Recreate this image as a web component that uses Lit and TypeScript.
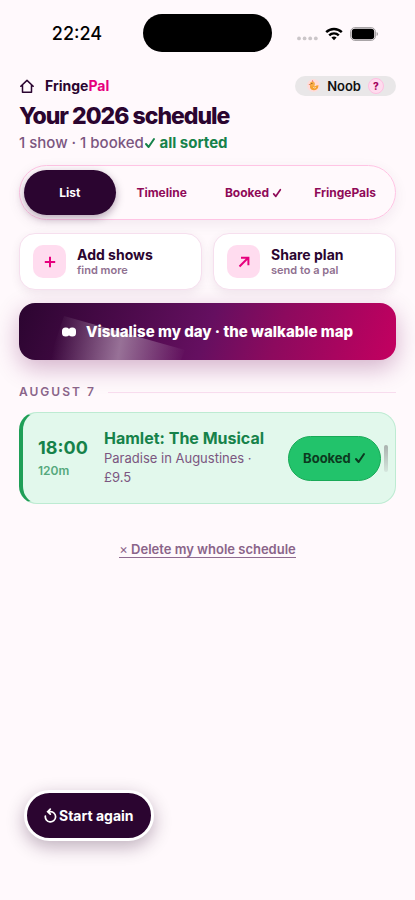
import { LitElement, html, css, svg } from "lit";
import { customElement, state } from "lit/decorators.js";
import { classMap } from "lit/directives/class-map.js";

const check = html`<svg class="check" viewBox="0 0 12 12" aria-hidden="true"><path d="M2 7l2.6 3L10 2" /></svg>`;

@customElement("status-bar")
class StatusBar extends LitElement {
  static styles = css`
    :host {
      display: grid;
      grid-template-columns: 1fr 129px 1fr;
      align-items: center;
      height: 38px;
      padding: 14px 0 0;
      color: #000;
    }
    .clock {
      padding: 2px 0 0 11px;
      text-align: center;
      font-size: 18px;
      line-height: 24px;
      font-weight: 500;
    }
    .island {
      height: 38px;
      border-radius: 19px;
      background: #000;
    }
    .signals {
      display: flex;
      align-items: center;
      gap: 7px;
      padding: 1px 0 0 25px;
    }
    .dots { width: 21px; height: 14px; }
    .wifi { width: 18px; height: 14px; }
    .battery { width: 28px; height: 14px; }
  `;

  render() {
    return html`
      <span class="clock">22:24</span>
      <span class="island"></span>
      <span class="signals">
        <svg class="dots" viewBox="0 0 21 14" fill="#cbc6c9">
          ${[2, 7.6, 13.2, 18.8].map((x) => svg`<circle cx=${x} cy="11.4" r="1.9" />`)}
        </svg>
        <svg class="wifi" viewBox="0 0 18 14" fill="none" stroke="#000" stroke-width="2.4">
          <path d="M1.2 5.2a11 11 0 0 1 15.6 0" />
          <path d="M4.2 8.4a6.8 6.8 0 0 1 9.6 0" />
          <path d="M9 13.2L6.4 10.6a3.8 3.8 0 0 1 5.2 0z" fill="#000" stroke="none" />
        </svg>
        <svg class="battery" viewBox="0 0 28 14">
          <rect x=".6" y=".6" width="24.8" height="12.8" rx="4.2" fill="none" stroke="#9f9b9d" />
          <rect x="1.8" y="1.8" width="22.4" height="10.4" rx="3" />
          <path d="M26.6 5v4q1.4-.6 1.4-2t-1.4-2z" fill="#9f9b9d" />
        </svg>
      </span>
    `;
  }
}

@customElement("app-root")
class AppRoot extends LitElement {
  @state() private tab = "List";

  static styles = css`
    :host {
      display: block;
      position: relative;
      box-sizing: border-box;
      min-height: 100vh;
      background: #fff9fc;
      color: #2b0530;
      font-family: Inter, "Liberation Sans", sans-serif;
      font-size: 14px;
      line-height: 18px;
    }
    button {
      font: inherit;
      color: inherit;
      border: 0;
      padding: 0;
      margin: 0;
      background: none;
      cursor: pointer;
    }
    .page { padding: 23px 19px 120px; }
    .check {
      width: 12px;
      height: 12px;
      fill: none;
      stroke: currentColor;
      stroke-width: 2;
      stroke-linecap: round;
      stroke-linejoin: round;
      vertical-align: -1px;
    }

    .top {
      display: flex;
      justify-content: space-between;
      align-items: center;
      height: 21px;
    }
    .brand {
      display: flex;
      align-items: center;
      gap: 10px;
      color: inherit;
      text-decoration: none;
      font-weight: 700;
    }
    .brand svg { width: 16px; height: 16px; }
    .pink { color: #e6007e; }
    .user {
      display: flex;
      align-items: center;
      gap: 7px;
      box-sizing: border-box;
      height: 20px;
      padding: 0 12px;
      border-radius: 10px;
      background: #e9e7e8;
      color: #111;
      font-size: 13px;
      font-weight: 600;
    }
    .user svg { width: 13px; height: 13px; }
    .help {
      box-sizing: border-box;
      width: 16px;
      height: 16px;
      border: 1px solid #ffbfe2;
      border-radius: 8px;
      background: #ffdcee;
      color: #a3005c;
      font-size: 10px;
      line-height: 14px;
      font-weight: 800;
      text-align: center;
    }

    h1 {
      margin: 4px 0 0;
      font-size: 23px;
      line-height: 32px;
      font-weight: 800;
      letter-spacing: -1px;
    }
    .summary {
      margin: 1px 0 0;
      font-size: 15px;
      line-height: 20px;
      font-weight: 500;
      color: #7b5680;
    }
    .sorted { color: #16824a; font-weight: 700; }

    .tabs {
      display: grid;
      grid-template-columns: repeat(4, 1fr);
      margin-top: 12px;
      padding: 4px;
      border: 1px solid #ffc4e4;
      border-radius: 28px;
      box-shadow: 0 4px 14px rgba(75, 10, 70, .07);
    }
    .tab {
      height: 45px;
      border-radius: 23px;
      color: #8f0a58;
      font-size: 12px;
      font-weight: 700;
      white-space: nowrap;
    }
    .tab .check { width: 10px; height: 10px; }
    .tab.on {
      background: #2b0530;
      color: #fff;
      box-shadow: 0 3px 8px rgba(43, 5, 48, .35);
    }

    .actions {
      display: grid;
      grid-template-columns: 1fr 1fr;
      gap: 11px;
      margin-top: 13px;
    }
    .action {
      display: flex;
      align-items: center;
      gap: 11px;
      height: 57px;
      padding: 0 13px;
      border: 1px solid #f6dfee;
      border-radius: 16px;
      background: #fff;
      box-shadow: 0 3px 10px rgba(75, 10, 70, .08);
      text-align: left;
    }
    .tile {
      display: grid;
      place-items: center;
      width: 33px;
      height: 33px;
      border-radius: 10px;
      background: #ffdcef;
    }
    .tile svg {
      width: 14px;
      height: 14px;
      fill: none;
      stroke: #e6007e;
      stroke-width: 2;
    }
    .action strong, .action small { display: block; }
    .action strong { font-size: 14px; line-height: 17px; font-weight: 700; }
    .action small { font-size: 11px; line-height: 14px; font-weight: 600; color: #8f7090; }

    .map {
      display: flex;
      position: relative;
      overflow: hidden;
      align-items: center;
      justify-content: center;
      gap: 10px;
      width: 100%;
      height: 57px;
      border-radius: 16px;
      background: linear-gradient(110deg, #2b0530 0%, #650f60 50%, #8c0a5e 68%, #c40060 100%);
      color: #fff;
      font-size: 15px;
      font-weight: 800;
    }
    .map-wrap {
      margin-top: 13px;
      border-radius: 16px;
      box-shadow: 0 8px 24px rgba(110, 10, 90, .3);
    }
    .beam {
      position: absolute;
      left: 30px;
      bottom: 0;
      width: 140px;
      height: 45px;
    }
    .map .eyes { width: 14px; height: 10px; fill: #fff; }
    .map span, .map .eyes { position: relative; }

    .day {
      display: flex;
      align-items: center;
      gap: 12px;
      margin: 23px 0 0;
      font-size: 12px;
      line-height: 18px;
      font-weight: 600;
      letter-spacing: 2px;
      color: #8a6489;
    }
    .day::after { content: ""; flex: 1; height: 1px; background: #f8dcee; }

    .show {
      display: flex;
      align-items: center;
      box-sizing: border-box;
      margin-top: 11px;
      min-height: 92px;
      padding: 12px 7px 12px 15px;
      border: 1px solid #bdebd2;
      border-left: 4px solid #1f9f57;
      border-radius: 18px;
      background: #e2f8ec;
    }
    .when { width: 66px; color: #16824a; }
    .when time { display: block; font-size: 18px; line-height: 24px; font-weight: 700; }
    .when small { display: block; margin-top: 2px; font-size: 12px; line-height: 18px; font-weight: 600; color: #55a87d; }
    .what { flex: 1; padding: 0 12px 2px 0; }
    .what h3 { margin: 0 -12px 0 0; font-size: 16px; line-height: 22px; font-weight: 700; color: #16824a; }
    .what p { margin: 0; font-size: 13px; line-height: 19px; color: #7b5680; }
    .booked {
      width: 93px;
      height: 45px;
      border: 1px solid #18a957;
      border-radius: 23px;
      background: #22c36b;
      color: #0c3a20;
      font-size: 13px;
      font-weight: 700;
    }
    .grip {
      width: 4px;
      height: 27px;
      margin-left: 3px;
      border-radius: 2px;
      background: linear-gradient(#a9b2ae, #d5e6dd);
    }

    .foot { margin-top: 36px; text-align: center; }
    .delete {
      border-bottom: 1px solid #8f6a90;
      font-size: 13px;
      line-height: 16px;
      font-weight: 600;
      color: #8a6489;
    }
    .delete span { font-weight: 400; }

    .restart {
      position: absolute;
      left: 24px;
      bottom: 59px;
      display: flex;
      align-items: center;
      gap: 2px;
      height: 51px;
      padding: 0 17px;
      border: 3px solid #fff;
      border-radius: 26px;
      background: #2b0530;
      color: #fff;
      font-weight: 700;
      box-shadow: 0 6px 18px rgba(43, 5, 48, .3);
    }
    .restart svg { width: 13px; height: 15px; fill: none; stroke: #fff; stroke-width: 1.6; stroke-linecap: round; }
  `;

  render() {
    const tabs = ["List", "Timeline", "Booked", "FringePals"];
    return html`
      <status-bar></status-bar>
      <main class="page">
        <header class="top">
          <a class="brand" href="#">
            <svg viewBox="0 0 16 16" fill="none" stroke="#2b0530" stroke-width="1.5" stroke-linejoin="round" stroke-linecap="round">
              <path d="M1.8 8.2L8 2.4l6.2 5.8M3.5 7v7.2h9V7" />
            </svg>
            <span>Fringe<span class="pink">Pal</span></span>
          </a>
          <button class="user">
            <svg viewBox="0 0 13 13">
              <circle cx="6.5" cy="6.5" r="6.5" fill="#ffdcda" />
              <path d="M3 6.500q-.6 3 1.600 4.300 3 1.200 5.200-.6 1.700-1.500 1.700-4-2.200 0-3.800 1.200-1-2-4.700-.9z" fill="#f5a030" />
              <circle cx="5.400" cy="4.900" r="2.500" fill="#f8ac45" />
              <path d="M5 2.600l.4-1.500 1.100 1.300z" fill="#e8483c" />
              <path d="M3.300 4.900L1.400 5.700l2.100.5z" fill="#d9622b" />
              <circle cx="4.900" cy="4.600" r=".5" fill="#4b2a1c" />
              <path d="M6 8.200q1.500 1.400 3 .2" stroke="#ffe9cf" stroke-width=".7" fill="none" />
            </svg>
            <span>Noob</span>
            <span class="help">?</span>
          </button>
        </header>
        <h1>Your 2026 schedule</h1>
        <p class="summary">1 show · 1 booked<span class="sorted">${check} all sorted</span></p>

        <nav class="tabs">
          ${tabs.map(
            (t) => html`<button class=${classMap({ tab: true, on: t === this.tab })} @click=${() => (this.tab = t)}>${t}${t === "Booked" ? html` ${check}` : ""}</button>`
          )}
        </nav>

        <section class="actions">
          <button class="action">
            <span class="tile"><svg viewBox="0 0 14 14"><path d="M7 1.800v10.400M1.800 7h10.400" /></svg></span>
            <span><strong>Add shows</strong><small>find more</small></span>
          </button>
          <button class="action">
            <span class="tile"><svg viewBox="0 0 14 14"><path d="M2.500 11.500l8.700-8.700M4 2.800h7.400v7.400" /></svg></span>
            <span><strong>Share plan</strong><small>send to a pal</small></span>
          </button>
        </section>

        <div class="map-wrap">
          <button class="map">
            <svg class="beam" viewBox="0 0 140 45" aria-hidden="true">
              <defs>
                <linearGradient id="beam" gradientUnits="userSpaceOnUse" x1="6" y1="20" x2="136" y2="42">
                  <stop offset="0" stop-color="#fff" stop-opacity="0" />
                  <stop offset=".5" stop-color="#fff" stop-opacity=".42" />
                  <stop offset="1" stop-color="#fff" stop-opacity="0" />
                </linearGradient>
              </defs>
              <path d="M15 1L136 35L132 45H0z" fill="url(#beam)" />
            </svg>
            <svg class="eyes" viewBox="0 0 14 10"><rect x="0" y=".5" width="7.500" height="9" rx="3.500" /><rect x="6.500" y=".5" width="7.500" height="9" rx="3.500" /></svg>
            <span>Visualise my day · the walkable map</span>
          </button>
        </div>

        <h2 class="day">AUGUST 7</h2>
        <article class="show">
          <div class="when"><time>18:00</time><small>120m</small></div>
          <div class="what">
            <h3>Hamlet: The Musical</h3>
            <p>Paradise in Augustines · £9.5</p>
          </div>
          <button class="booked">Booked ${check}</button>
          <span class="grip"></span>
        </article>

        <div class="foot"><button class="delete"><span>×</span> Delete my whole schedule</button></div>
      </main>
      <button class="restart">
        <svg viewBox="0 0 12 14"><path d="M1.200 7.500A4.800 4.800 0 1 0 6 3.400H3.600M5.800 1L3.400 3.400l2.400 2.400" /></svg>
        Start again
      </button>
    `;
  }
}
